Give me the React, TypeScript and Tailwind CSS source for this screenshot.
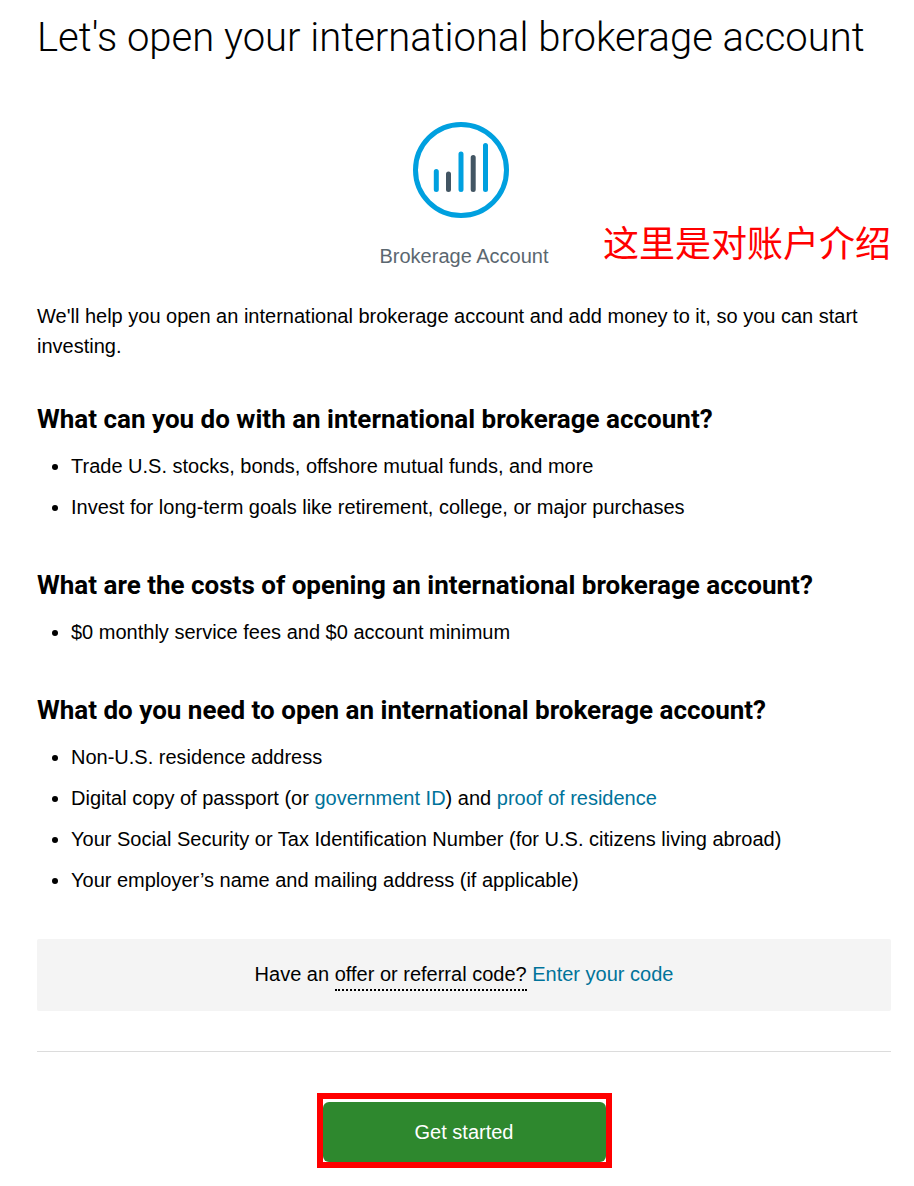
import type { ReactNode } from 'react';

const linkClass = 'text-[#00739a] hover:underline';

function BrokerageIcon() {
  return (
    <svg width="102" height="96" viewBox="0 0 102 96" fill="none" aria-hidden="true">
      <circle cx="48" cy="48" r="45.5" stroke="#00a0df" strokeWidth="5" />
      <g strokeWidth="5" strokeLinecap="round">
        <path d="M23.3 49.5V67.5M48 32V67.5M72.5 23.5V67.5" stroke="#00a0df" />
        <path d="M35.5 52V67.5M60.2 35.5V67.5" stroke="#425563" />
      </g>
    </svg>
  );
}

function Section({ title, children }: { title: string; children: ReactNode }) {
  return (
    <section>
      <h2 className="font-['Roboto',sans-serif] text-[26px] leading-[28px] font-bold">{title}</h2>
      <ul className="mt-[18px] list-disc space-y-[11px] pl-[34px]">{children}</ul>
    </section>
  );
}

export default function App() {
  return (
    <main className="bg-white pt-[14px] pr-[23px] pb-[18px] pl-[37px] font-['Liberation_Sans',sans-serif] text-[20px] leading-[30px] text-black">
      <h1 className="font-['Roboto',sans-serif] text-[40px] leading-[48px] font-light">
        Let's open your international brokerage account
      </h1>

      <div className="relative mt-[60px] flex flex-col items-center">
        <BrokerageIcon />
        <p className="mt-[23px] text-[#5b6770]">Brokerage Account</p>
        {/* Annotation */}
        <p className="absolute right-0 bottom-[3px] font-['Noto_Sans_CJK_SC',sans-serif] text-[36px] leading-[54px] text-[#ff0000]">
          这里是对账户介绍
        </p>
      </div>

      <p className="mt-[30px]">
        We'll help you open an international brokerage account and add money to it, so you can start investing.
      </p>

      <div className="mt-11 space-y-[49px]">
        <Section title="What can you do with an international brokerage account?">
          <li>Trade U.S. stocks, bonds, offshore mutual funds, and more</li>
          <li>Invest for long-term goals like retirement, college, or major purchases</li>
        </Section>
        <Section title="What are the costs of opening an international brokerage account?">
          <li>$0 monthly service fees and $0 account minimum</li>
        </Section>
        <Section title="What do you need to open an international brokerage account?">
          <li>Non-U.S. residence address</li>
          <li>
            Digital copy of passport (or <a href="#government-id" className={linkClass}>government ID</a>) and{' '}
            <a href="#proof-of-residence" className={linkClass}>proof of residence</a>
          </li>
          <li>Your Social Security or Tax Identification Number (for U.S. citizens living abroad)</li>
          <li>Your employer’s name and mailing address (if applicable)</li>
        </Section>
      </div>

      <div className="mt-11 rounded-[2px] bg-[#f4f4f4] py-5 text-center">
        Have an{' '}
        <button type="button" className="border-b-2 border-dotted border-black">
          offer or referral code?
        </button>{' '}
        <a href="#enter-code" className={linkClass}>Enter your code</a>
      </div>

      <hr className="mt-10 border-[#dcdcdc]" />

      <div className="mt-[41px] flex justify-center">
        <div className="w-[295px] border-[6px] border-[#ff0000] pt-[3px]">
          <button type="button" className="h-[60px] w-full rounded-[6px] bg-[#2e882e] text-white">
            Get started
          </button>
        </div>
      </div>
    </main>
  );
}
